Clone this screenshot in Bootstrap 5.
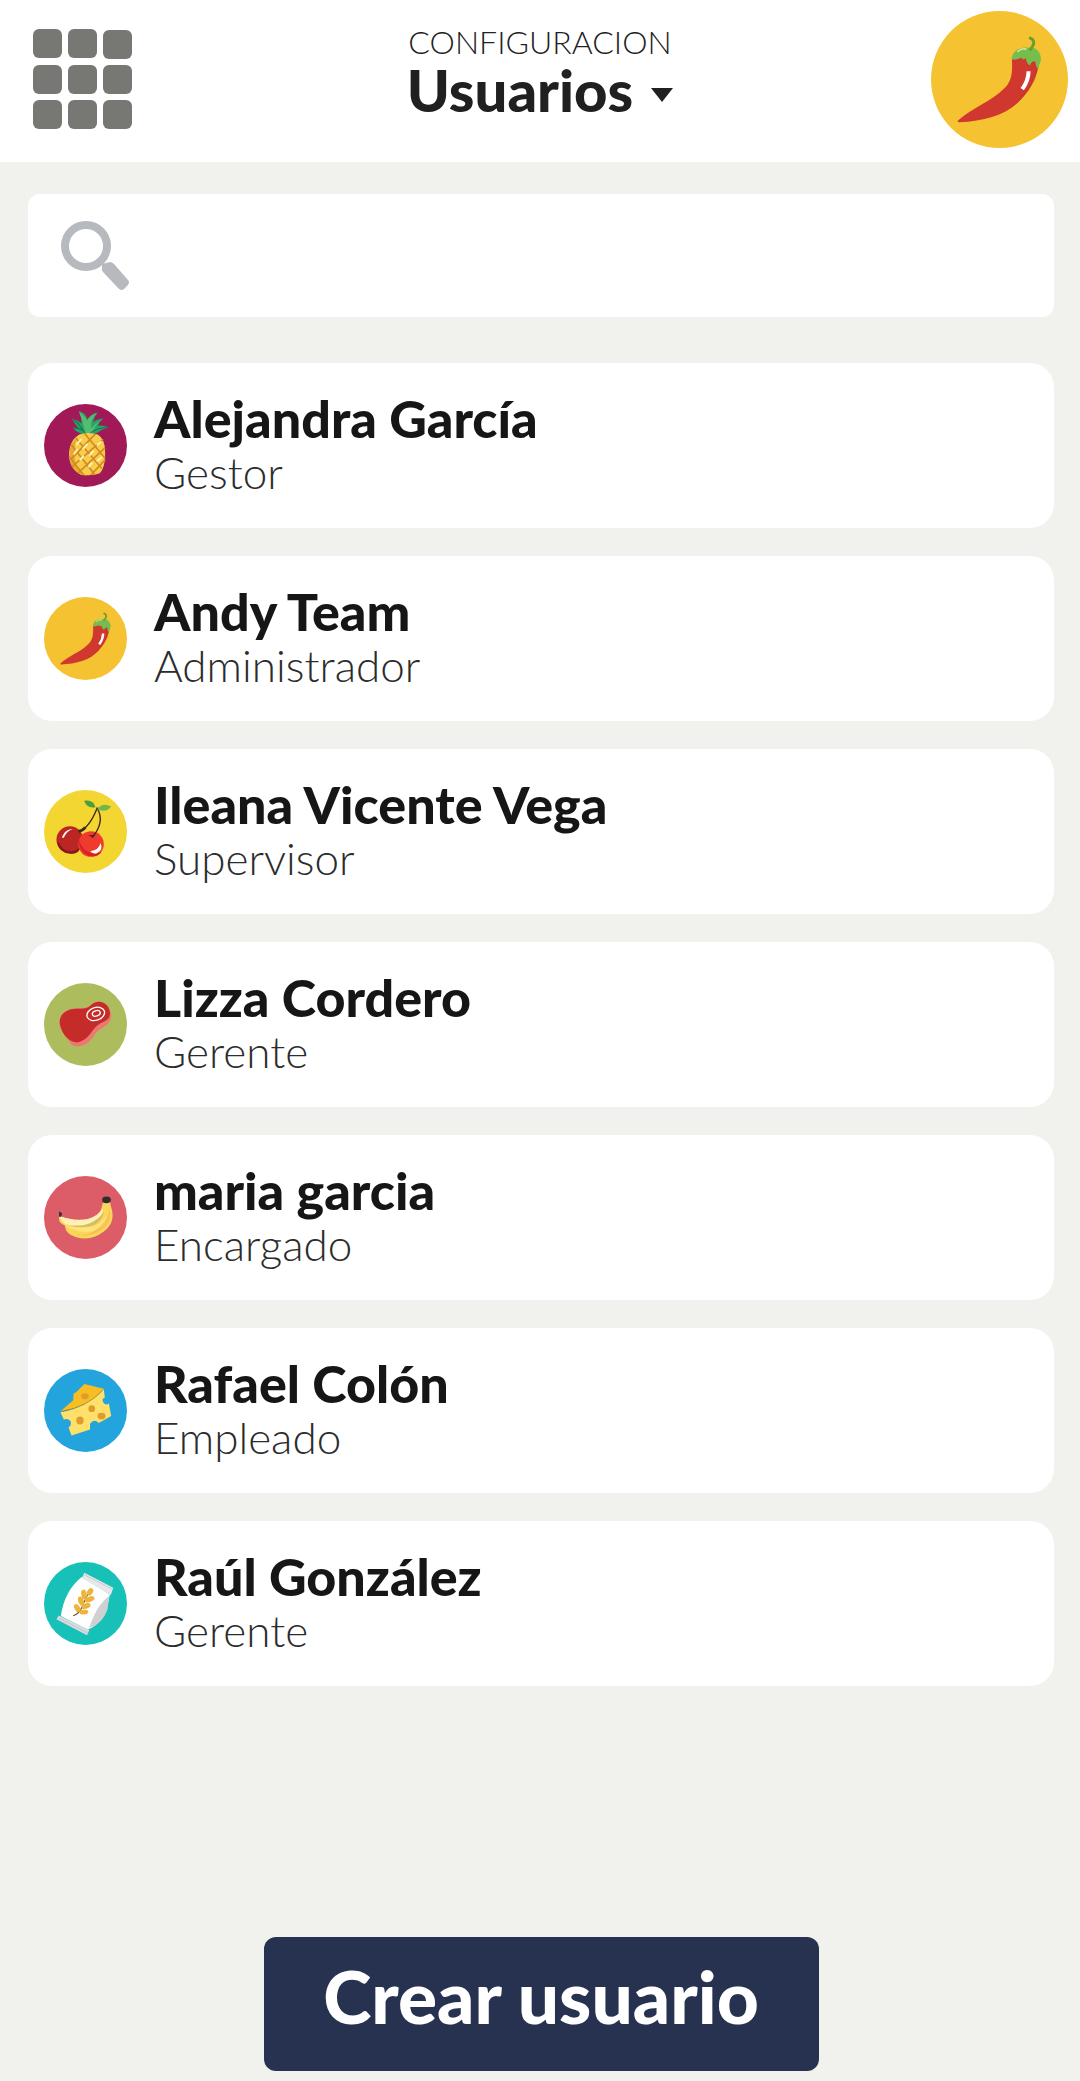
<!DOCTYPE html>
<html lang="es">
<head>
<meta charset="utf-8">
<meta name="viewport" content="width=device-width, initial-scale=1">
<title>Usuarios</title>
<link href="https://cdn.jsdelivr.net/npm/bootstrap@5.3.0/dist/css/bootstrap.min.css" rel="stylesheet">
<style>
  body { font-family: Lato, "Open Sans", sans-serif; background: #f1f2ed; color: #161616; }
  .topbar { height: 162px; padding-bottom: 3px; }
  .topbar-side { flex: 1 1 0; padding: 0 12px 0 32px; }
  .apps-icon { width: 101px; height: 101px; }
  .section-label { font-size: 32px; line-height: 36px; font-weight: 300; color: #222; }
  .section-title { font-size: 58px; line-height: 60px; font-weight: 900; color: #202020; gap: 18px; }
  .section-title::after { content: ""; border: 11px solid transparent; border-top: 14px solid #202020; border-bottom: 0; margin-top: 10px; }
  .me-avatar { width: 137px; height: 137px; }
  .page-body { padding: 32px 26px 10px 28px; }
  .search-box { height: 123px; border-radius: 12px; padding: 0 32px; gap: 28px; }
  .search-icon { width: 70px; height: 72px; }
  .search-box .form-control { font-size: 44px; }
  .user-list { margin-top: 46px; gap: 28px; }
  .user-card { height: 165px; border-radius: 24px; padding: 0 16px; gap: 27px; }
  .user-avatar { width: 83px; height: 83px; }
  .user-name { font-size: 52px; line-height: 56px; font-weight: 900; color: #161616; }
  .user-role { font-size: 44px; line-height: 52px; font-weight: 300; color: #2c2c2c; }
  .create-btn { width: 555px; height: 134px; border-radius: 12px; padding: 0 0 16px; background: #26324f; color: #fff; font-size: 73px; line-height: 80px; font-weight: 900; }
  .create-btn:hover { background: #1d2740; color: #fff; }
</style>
</head>
<body>
<svg class="d-none" aria-hidden="true">
  <symbol id="chili" viewBox="30 33 410 410">
    <circle cx="235" cy="238" r="205" fill="#f5c332"/>
    <path d="M272 172C274 212 274 242 248 266C211 304 153 323 111 361Q107 366 116 366C190 362 255 346 299 298C334 262 347 224 355 184L317 158Z" fill="#d0382f"/>
    <path d="M326 188C350 190 342 230 322 260C308 286 280 314 253 331C291 315 326 270 343 236L355 184Z" fill="#bd302c" opacity=".35"/>
    <path d="M272 178C272 156 289 143 312 142L338 144C354 150 360 167 359 181Q353 193 351 208Q344 202 342 184Q332 181 326 196Q315 190 314 174Q306 183 301 173Q286 180 272 178Z" fill="#77bd4e"/>
    <path d="M290 154Q302 143 314 147" fill="none" stroke="#d8e69c" stroke-width="5" stroke-linecap="round"/>
    <path d="M327 148Q348 123 327 114" fill="none" stroke="#6a9e31" stroke-width="9" stroke-linecap="round"/>
    <path d="M322 213Q322 240 303 267" fill="none" stroke="#fff" stroke-width="12"/>
  </symbol>
  <symbol id="pineapple" viewBox="44 45 247 247">
    <circle cx="167.500" cy="168.500" r="123.500" fill="#a11a57"/>
    <path d="M166 136Q140 132 130 115Q143 117 150 121Q135 104 127 88Q145 93 155 103Q157 80 147 65Q169 72 173 91Q182 75 204 70Q192 84 190 99Q206 88 221 88Q209 97 204 109Q222 108 237 115Q216 120 207 128Q190 139 166 136Z" fill="#25a567"/>
    <path d="M168 132Q160 96 148 68Q165 79 172 94Q181 80 200 72Q181 94 184 118Q198 102 217 91Q194 108 187 133Z" fill="#55bd70"/>
    <path d="M168 134Q160 119 134 116M178 135Q198 116 233 115M160 123Q146 100 131 91" fill="none" stroke="#14774c" stroke-width="3"/>
    <path d="M149 136Q175 126 204 136Q226 149 226 189Q227 233 210 251Q190 260 155 256Q125 241 119 207Q115 157 149 136Z" fill="#f9cd4b"/>
    <path d="M125 163Q111 210 134 241Q148 258 169 257Q138 239 135 204Q134 176 141 146Z" fill="#e7a92f"/>
    <path d="M139 147L216 237M165 133L226 207M125 166L195 255M119 202L161 255M197 134L124 210M220 150L127 232M226 175L145 251M226 211L184 256" fill="none" stroke="#d28a24" stroke-width="5"/>
    <path d="M141 165L154 151M134 193L143 181M161 178L172 165M180 197L190 186M203 214L215 204M152 211L161 201M203 166L213 158M178 231L186 221" stroke="#fff4ae" stroke-width="6" stroke-linecap="round"/>
  </symbol>
  <symbol id="cherries" viewBox="44 42 247 247">
    <circle cx="167.500" cy="165.500" r="123.500" fill="#f3d631"/>
    <circle cx="121" cy="190" r="40" fill="#bb2524"/>
    <path d="M89 199Q101 229 133 223Q149 219 155 205Q150 235 122 232Q88 229 83 196Z" fill="#87171c"/>
    <circle cx="184" cy="203" r="38" fill="#ef3b2d"/>
    <path d="M148 190Q146 224 177 238Q202 244 216 226Q191 238 168 222Q154 210 148 190Z" fill="#d6202a"/>
    <path d="M176 176Q187 188 197 175" fill="#8e1b20"/>
    <path d="M149 165Q179 154 202 96Q227 137 187 184" fill="none" stroke="#3e271c" stroke-width="4"/>
    <path d="M146 165Q159 163 167 153" fill="none" stroke="#3e271c" stroke-width="8"/>
    <path d="M163 74Q191 69 197 93Q174 99 163 74Z" fill="#4b9e3d"/>
    <path d="M202 100Q217 78 244 91Q231 110 202 100Z" fill="#72b648"/>
    <path d="M98 181Q107 158 130 158Q112 164 103 183Q99 187 98 181ZM182 224Q208 221 212 200Q222 222 201 230Q190 233 182 224Z" fill="#fff"/>
  </symbol>
  <symbol id="steak" viewBox="44 44 247 247">
    <circle cx="167.500" cy="167.500" r="123.500" fill="#adbd5e"/>
    <path d="M95 184C79 146 103 119 139 119C165 118 174 120 184 108C207 88 240 103 244 139C244 175 208 175 193 200C177 227 148 240 126 228Z" fill="#ef7772"/>
    <path d="M96 181C79 145 107 121 140 121C163 121 174 120 185 109C206 91 235 101 240 130C243 159 215 158 201 172C183 187 179 213 142 221C122 219 103 204 96 181Z" fill="#c52b29"/>
    <g fill="none" stroke="#fff" stroke-width="4" transform="rotate(-19 198 136)">
      <ellipse cx="198" cy="136" rx="27" ry="19"/>
      <ellipse cx="200" cy="135" rx="12" ry="8"/>
    </g>
  </symbol>
  <symbol id="banana" viewBox="44 45 247 247">
    <circle cx="167.500" cy="168.500" r="123.500" fill="#dc5c68"/>
    <path d="M89 165Q84 184 106 192Q108 218 140 227Q185 239 220 212Q254 187 247 150L240 122L219 125Q213 160 186 177Q150 184 89 165Z" fill="#fbd55c"/>
    <path d="M91 164Q134 180 174 173Q202 166 220 141Q220 166 193 181Q157 200 119 192Q95 187 91 164Z" fill="#fff0b4"/>
    <path d="M112 189Q156 199 190 181Q221 162 223 148Q219 184 184 194Q149 202 112 189Z" fill="#d5bc69"/>
    <path d="M105 193Q153 204 191 195Q226 183 239 145Q240 187 207 204Q164 222 105 193Z" fill="#ffe57b"/>
    <path d="M239 142Q249 184 213 207Q169 233 128 214Q169 231 203 201Q231 182 239 142Z" fill="#f5b748" opacity=".65"/>
    <ellipse cx="230" cy="116" rx="13" ry="10" fill="#302d2e"/>
    <path d="M89 151L98 156L95 166L89 166Z" fill="#302d2e"/>
  </symbol>
  <symbol id="cheese" viewBox="44 44 247 247">
    <circle cx="167.500" cy="167.500" r="123.500" fill="#24a4dc"/>
    <path d="M93 170L131 137L132 118L143 110L164 89L222 103Q181 156 93 170Z" fill="#f7bd23"/>
    <path d="M93 173Q174 157 222 104L225 129Q215 133 220 143Q227 154 237 147L244 184L207 205Q193 190 181 207L181 224L126 242L117 218Q127 213 123 199Q116 190 103 194Z" fill="#ffe06a"/>
    <path d="M95 170Q171 159 218 108" fill="none" stroke="#9b7d25" stroke-width="2"/>
    <g fill="#df9c2c"><ellipse cx="166" cy="125" rx="11" ry="9"/><circle cx="186" cy="162" r="10"/><ellipse cx="151" cy="197" rx="11" ry="12"/><ellipse cx="215" cy="184" rx="12" ry="10"/></g>
  </symbol>
  <symbol id="grain" viewBox="44 42 247 247">
    <circle cx="167.500" cy="165.500" r="123.500" fill="#18c1b7"/>
    <path d="M157 86Q105 127 94 203L174 243Q224 228 240 139Z" fill="#fff"/>
    <path d="M238 143Q201 169 178 239Q218 226 233 183Z" fill="#ced0d2"/>
    <path d="M164 74L250 119L243 140L157 90Z" fill="#e5e7e9"/>
    <path d="M88 201L179 244L172 260L81 212Z" fill="#d8dcde"/>
    <path d="M164 80L246 122M87 208L173 253" stroke="#b6bec4" stroke-width="2"/>
    <path d="M131 202Q151 195 158 173L180 126" fill="none" stroke="#684b2e" stroke-width="3"/>
    <g fill="#edb43d">
      <ellipse cx="181" cy="131" rx="8" ry="12" transform="rotate(35 181 131)"/>
      <ellipse cx="163" cy="139" rx="8" ry="15" transform="rotate(-10 163 139)"/>
      <ellipse cx="180" cy="153" rx="8" ry="15" transform="rotate(70 180 153)"/>
      <ellipse cx="154" cy="158" rx="8" ry="14" transform="rotate(-20 154 158)"/>
      <ellipse cx="169" cy="173" rx="8" ry="14" transform="rotate(70 169 173)"/>
      <ellipse cx="143" cy="179" rx="8" ry="13" transform="rotate(-30 143 179)"/>
      <ellipse cx="163" cy="191" rx="7" ry="13" transform="rotate(85 163 191)"/>
    </g>
  </symbol>
</svg>

<div class="d-flex flex-column min-vh-100">
  <header class="topbar bg-white d-flex align-items-center">
    <div class="topbar-side">
      <button type="button" class="btn border-0 p-0 d-block" aria-label="Menú">
        <svg class="apps-icon d-block" viewBox="0 0 101 101" fill="#777773" aria-hidden="true">
          <rect x="1" y="0" width="29" height="29" rx="6"/><rect x="36" y="0" width="29" height="29" rx="6"/><rect x="71" y="1" width="29" height="29" rx="6"/>
          <rect x="1" y="36" width="29" height="29" rx="6"/><rect x="36" y="36" width="29" height="29" rx="6"/><rect x="71" y="36" width="29" height="29" rx="6"/>
          <rect x="1" y="71" width="29" height="29" rx="6"/><rect x="36" y="71" width="29" height="29" rx="6"/><rect x="71" y="71" width="29" height="29" rx="6"/>
        </svg>
      </button>
    </div>
    <div class="text-center pb-3">
      <div class="section-label">CONFIGURACION</div>
      <button type="button" class="section-title btn border-0 p-0 d-flex align-items-center">Usuarios</button>
    </div>
    <div class="topbar-side d-flex justify-content-end">
      <a href="#" aria-label="Mi perfil"><svg class="me-avatar d-block" aria-hidden="true"><use href="#chili"/></svg></a>
    </div>
  </header>

  <main class="page-body d-flex flex-column flex-grow-1">
    <div class="search-box bg-white d-flex align-items-center">
      <label for="search" aria-label="Buscar">
        <svg class="search-icon d-block" viewBox="0 0 70 72" aria-hidden="true">
          <circle cx="26" cy="26" r="21" fill="none" stroke="#b6b9be" stroke-width="8"/>
          <path d="M42 44L50 42Q52 42 54 44L68 60Q70 62 68 65L64 69Q62 71 59 69L43 52Q41 50 42 48Z" fill="#b6b9be"/>
        </svg>
      </label>
      <input id="search" type="search" class="form-control border-0 bg-transparent shadow-none p-0">
    </div>

    <ul class="user-list list-unstyled d-flex flex-column mb-5">
      <li><a href="#" class="user-card bg-white d-flex align-items-center text-decoration-none"><svg class="user-avatar flex-shrink-0" aria-hidden="true"><use href="#pineapple"/></svg><span class="pb-1"><span class="user-name d-block">Alejandra García</span><span class="user-role d-block">Gestor</span></span></a></li>
      <li><a href="#" class="user-card bg-white d-flex align-items-center text-decoration-none"><svg class="user-avatar flex-shrink-0" aria-hidden="true"><use href="#chili"/></svg><span class="pb-1"><span class="user-name d-block">Andy Team</span><span class="user-role d-block">Administrador</span></span></a></li>
      <li><a href="#" class="user-card bg-white d-flex align-items-center text-decoration-none"><svg class="user-avatar flex-shrink-0" aria-hidden="true"><use href="#cherries"/></svg><span class="pb-1"><span class="user-name d-block">Ileana Vicente Vega</span><span class="user-role d-block">Supervisor</span></span></a></li>
      <li><a href="#" class="user-card bg-white d-flex align-items-center text-decoration-none"><svg class="user-avatar flex-shrink-0" aria-hidden="true"><use href="#steak"/></svg><span class="pb-1"><span class="user-name d-block">Lizza Cordero</span><span class="user-role d-block">Gerente</span></span></a></li>
      <li><a href="#" class="user-card bg-white d-flex align-items-center text-decoration-none"><svg class="user-avatar flex-shrink-0" aria-hidden="true"><use href="#banana"/></svg><span class="pb-1"><span class="user-name d-block">maria garcia</span><span class="user-role d-block">Encargado</span></span></a></li>
      <li><a href="#" class="user-card bg-white d-flex align-items-center text-decoration-none"><svg class="user-avatar flex-shrink-0" aria-hidden="true"><use href="#cheese"/></svg><span class="pb-1"><span class="user-name d-block">Rafael Colón</span><span class="user-role d-block">Empleado</span></span></a></li>
      <li><a href="#" class="user-card bg-white d-flex align-items-center text-decoration-none"><svg class="user-avatar flex-shrink-0" aria-hidden="true"><use href="#grain"/></svg><span class="pb-1"><span class="user-name d-block">Raúl González</span><span class="user-role d-block">Gerente</span></span></a></li>
    </ul>

    <button type="button" class="create-btn btn border-0 mt-auto mx-auto mw-100">Crear usuario</button>
  </main>
</div>
<script src="https://cdn.jsdelivr.net/npm/bootstrap@5.3.0/dist/js/bootstrap.bundle.min.js"></script>
</body>
</html>
